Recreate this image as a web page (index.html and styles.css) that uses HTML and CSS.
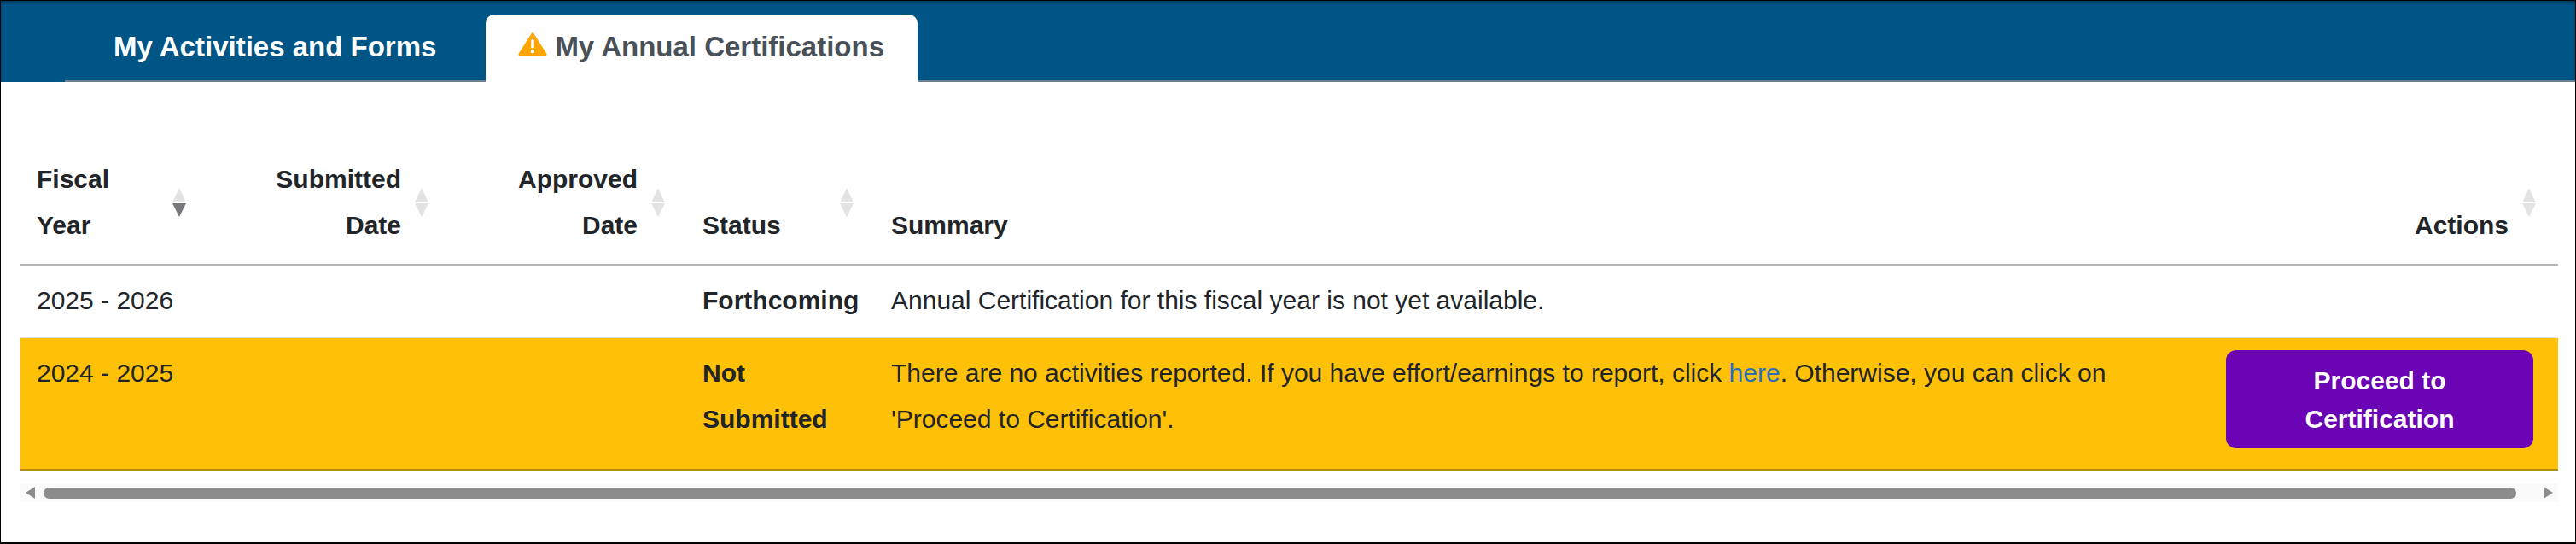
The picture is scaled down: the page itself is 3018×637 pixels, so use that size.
FILE: index.html
```html
<!DOCTYPE html>
<html lang="en">
<head>
<meta charset="utf-8">
<title>My Annual Certifications</title>
<link rel="stylesheet" href="styles.css">
</head>
<body>
<div class="frame">
  <nav class="tabbar">
    <ul class="tabs">
      <li class="tab"><a href="#">My Activities and Forms</a></li>
      <li class="tab active"><a href="#"><svg class="warn" viewBox="0 0 34 29" aria-hidden="true"><path d="M17 2 L32.4 26 Q33 27.6 31.4 27.6 L2.6 27.6 Q1 27.6 1.6 26 Z" fill="#ffa500" stroke="#ffa500" stroke-width="2" stroke-linejoin="round"/><rect x="15.2" y="9" width="3.6" height="10.5" rx="1.6" fill="#fff"/><circle cx="17" cy="23.2" r="2.2" fill="#fff"/></svg><span>My Annual Certifications</span></a></li>
    </ul>
  </nav>
  <main class="content">
    <table class="grid">
      <colgroup>
        <col class="c-year"><col class="c-sub"><col class="c-app"><col class="c-status"><col class="c-summary"><col class="c-actions">
      </colgroup>
      <thead>
        <tr>
          <th class="sortable">Fiscal<br>Year<span class="sort desc"><i></i><i></i></span></th>
          <th class="sortable num">Submitted<br>Date<span class="sort"><i></i><i></i></span></th>
          <th class="sortable num">Approved<br>Date<span class="sort"><i></i><i></i></span></th>
          <th class="sortable">Status<span class="sort"><i></i><i></i></span></th>
          <th>Summary</th>
          <th class="sortable num">Actions<span class="sort"><i></i><i></i></span></th>
        </tr>
      </thead>
      <tbody>
        <tr>
          <td>2025 - 2026</td><td></td><td></td>
          <td class="status">Forthcoming</td>
          <td class="summary">Annual Certification for this fiscal year is not yet available.</td>
          <td></td>
        </tr>
        <tr class="warning">
          <td>2024 - 2025</td><td></td><td></td>
          <td class="status">Not Submitted</td>
          <td class="summary">There are no activities reported. If you have effort/earnings to report, click <a href="#">here</a>. Otherwise, you can click on 'Proceed to Certification'.</td>
          <td class="action"><button class="proceed" type="button">Proceed to Certification</button></td>
        </tr>
      </tbody>
    </table>
    <div class="scrollbar">
      <span class="arrow left"></span>
      <span class="thumb"></span>
      <span class="arrow right"></span>
    </div>
  </main>
</div>
</body>
</html>
```
FILE: styles.css
```css
* { box-sizing: border-box; }
html, body { margin: 0; padding: 0; background: #fff; }
body { font-family: "Liberation Sans", Arial, sans-serif; color: #212529; font-size: 30px; }
.frame { width: 3018px; height: 637px; border: 1px solid #000; border-bottom-width: 2px; overflow: hidden; }
.tabbar { height: 95px; background: #005587; padding-top: 16px; padding-left: 75px; box-shadow: inset 0 3px 3px rgba(0, 0, 0, .25); }
.tabs { display: flex; list-style: none; margin: 0; padding: 0; height: 79px; border-bottom: 2px solid #6b7f8c; }
.tab { height: 79px; }
.tab a { display: flex; align-items: center; gap: 9px; height: 79px; padding: 0 58px 4px 57px; font-size: 33px; font-weight: 700; color: #fff; text-decoration: none; white-space: nowrap; }
.tab.active a { background: #fff; color: #495057; border-radius: 10px 10px 0 0; padding: 0 39px 4px 38px; }
.warn { width: 34px; height: 29px; flex: none; margin-top: -6px; }
.content { padding: 69px 20px 0 23px; }
.grid { width: 2973px; table-layout: fixed; border-collapse: collapse; line-height: 54px; }
.c-year { width: 220px; }
.c-sub { width: 284px; }
.c-app { width: 277px; }
.c-status { width: 221px; }
.c-summary { width: 1564px; }
.c-actions { width: 407px; }
th { position: relative; padding: 18px 58px 18px 19px; text-align: left; vertical-align: bottom; font-weight: 700; border-bottom: 2px solid #b5b5b5; }
th.num { text-align: right; }
td { padding: 14px 19px 16px; vertical-align: top; border-bottom: 1px solid #dee2e6; }
th:nth-child(n+4), td:nth-child(n+4) { padding-left: 18px; }
td.summary { padding-right: 100px; }
.status { font-weight: 700; }
.warning td { background: #ffc107; border-bottom: 2px solid #ba8d05; padding-bottom: 15px; }
.warning a { color: #2a6ebb; text-decoration: none; }
.warning .action { padding: 14px 29px 24px 18px; }
.proceed { display: block; width: 360px; height: 115px; border: 0; border-radius: 12px; background: #6a04b4; color: #fff; font: 700 30px/45px "Liberation Sans", Arial, sans-serif; padding: 0 40px; }
.sort { position: absolute; right: 26px; top: 50%; margin-top: -17px; width: 16px; display: flex; flex-direction: column; gap: 1px; }
.sort i { display: block; width: 0; height: 0; border-left: 8px solid transparent; border-right: 8px solid transparent; }
.sort i:first-child { border-bottom: 17px solid #e2e4e4; }
.sort i:last-child { border-top: 16px solid #e2e4e4; }
.sort.desc i:last-child { border-top-color: #77787b; }
.scrollbar { display: flex; align-items: center; height: 22px; margin-top: 15px; background: #fafafa; padding: 0 6px; }
.thumb { width: 2897px; height: 13px; margin: 0 auto 0 10px; border-radius: 7px; background: #8c8c8c; }
.arrow { width: 0; height: 0; border-top: 7px solid transparent; border-bottom: 7px solid transparent; }
.arrow.left { border-right: 11px solid #8c8c8c; }
.arrow.right { border-left: 11px solid #8c8c8c; }
```
